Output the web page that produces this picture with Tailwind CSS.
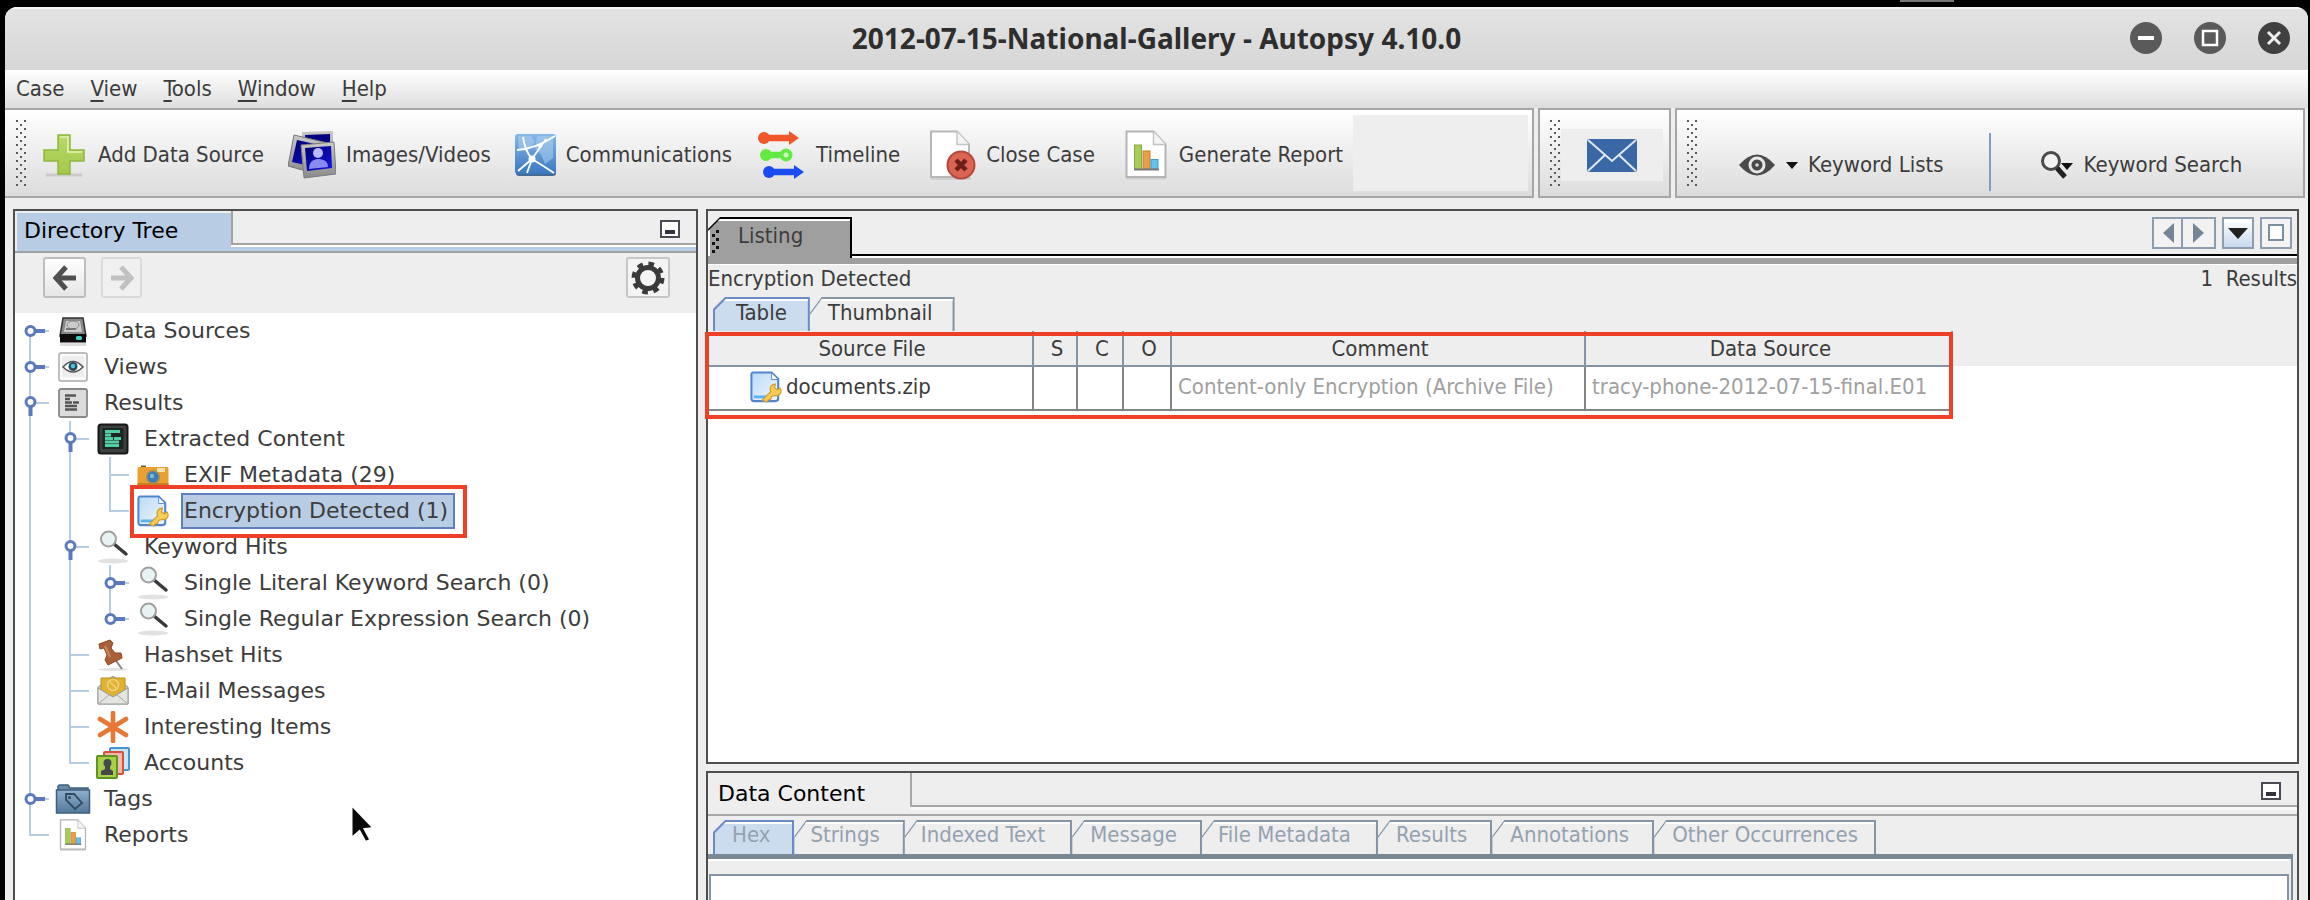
<!DOCTYPE html>
<html lang="en">
<head>
<meta charset="utf-8">
<title>2012-07-15-National-Gallery - Autopsy 4.10.0</title>
<script src="https://cdn.jsdelivr.net/npm/@tailwindcss/browser@4"></script>
</head>
<body class="bg-black">

<svg class="absolute size-0" aria-hidden="true">
  <defs>
    <linearGradient id="steel" x1="0" y1="0" x2="0" y2="1"><stop offset="0" stop-color="#8fb0cc"/><stop offset="1" stop-color="#53789b"/></linearGradient>
    <linearGradient id="sky" x1="0" y1="0" x2="1" y2="1"><stop offset="0" stop-color="#b9d9f6"/><stop offset="1" stop-color="#f2f8ff"/></linearGradient>
    <linearGradient id="comm" x1="0" y1="0" x2="0" y2="1"><stop offset="0" stop-color="#86b8e6"/><stop offset="1" stop-color="#3a78c0"/></linearGradient>
    <linearGradient id="plus" x1="0" y1="0" x2="0" y2="1"><stop offset="0" stop-color="#b7d96a"/><stop offset="1" stop-color="#a3c94a"/></linearGradient>
    <linearGradient id="photo" x1="0" y1="0" x2="1" y2="1"><stop offset="0" stop-color="#000070"/><stop offset="1" stop-color="#1414e0"/></linearGradient>
    <linearGradient id="frame" x1="0" y1="0" x2="0" y2="1"><stop offset="0" stop-color="#c8c8c8"/><stop offset="1" stop-color="#8a8a8a"/></linearGradient>
    <pattern id="grip" width="8" height="8" patternUnits="userSpaceOnUse"><path d="M1 1h2v2h-2zM5 5h2v2h-2z" fill="#5a5a5a"/></pattern>
  </defs>
  <!-- tree guides: 40 x 36 cells, trunk at x = 15 -->
  <symbol id="g-line" viewBox="0 0 40 36"><path d="M15 0v36" stroke="#b8cce4" stroke-width="2"/></symbol>
  <symbol id="g-tee" viewBox="0 0 40 36"><path d="M15 0v36M15 18h19" stroke="#b8cce4" stroke-width="2"/></symbol>
  <symbol id="g-end" viewBox="0 0 40 36"><path d="M15 0v19M15 18h19" stroke="#b8cce4" stroke-width="2"/></symbol>
  <symbol id="g-key" viewBox="0 0 40 36"><path d="M20 18h14" stroke="#b8cce4" stroke-width="2"/><path d="M20 18h10" stroke="#5b79bd" stroke-width="4"/><circle cx="15.500" cy="18" r="4.500" fill="#fff" stroke="#5b79bd" stroke-width="3"/></symbol>
  <symbol id="g-closed" viewBox="0 0 40 36"><path d="M15 0v36" stroke="#b8cce4" stroke-width="2"/><use href="#g-key" width="40" height="36"/></symbol>
  <symbol id="g-closed-first" viewBox="0 0 40 36"><path d="M15 18v18" stroke="#b8cce4" stroke-width="2"/><use href="#g-key" width="40" height="36"/></symbol>
  <symbol id="g-closed-last" viewBox="0 0 40 36"><path d="M15 0v18" stroke="#b8cce4" stroke-width="2"/><use href="#g-key" width="40" height="36"/></symbol>
  <symbol id="g-open" viewBox="0 0 40 36"><path d="M15 0v36M20 18h14" stroke="#b8cce4" stroke-width="2"/><path d="M15.500 22v9" stroke="#5b79bd" stroke-width="4"/><circle cx="15.500" cy="17" r="4.500" fill="#fff" stroke="#5b79bd" stroke-width="3"/></symbol>

  <symbol id="i-drive" viewBox="0 0 32 32"><path d="M3 29.500h26" stroke="#ddd" stroke-width="3"/><path d="M6 3h20l3 18H3z" fill="#888" stroke="#333" stroke-width="1.500"/><path d="M9 6h14l2 11H7z" fill="#ccc"/><ellipse cx="16" cy="10" rx="6" ry="4" fill="none" stroke="#888"/><path d="M9 14h10" stroke="#777" stroke-width="2"/><rect x="3" y="19" width="26" height="8.500" fill="#0c0c0c"/><rect x="19" y="21" width="6" height="4" rx="1.500" fill="#3fd0c0"/></symbol>
  <symbol id="i-views" viewBox="0 0 32 32"><rect x="2" y="2" width="28" height="28" rx="2" fill="#fafafa" stroke="#aaa" stroke-width="1.500"/><rect x="5" y="5" width="22" height="21" fill="#eee"/><path d="M6 16q10-11 20 0q-10 10-20 0z" fill="#fff" stroke="#555" stroke-width="1.500"/><circle cx="16" cy="15.500" r="4.500" fill="#2c4c5c"/><circle cx="16" cy="15" r="2.200" fill="#4bc4e8"/></symbol>
  <symbol id="i-results" viewBox="0 0 32 32"><rect x="2" y="2" width="28" height="28" rx="2" fill="#dcdcdc" stroke="#888" stroke-width="1.800"/><path d="M8 8.500h11M8 12h5M8 15.500h7M16 15.500h6M8 19h12M8 22.500h12" stroke="#555" stroke-width="2.400"/></symbol>
  <symbol id="i-extract" viewBox="0 0 32 32"><rect x="1.500" y="1.500" width="29" height="29" rx="2.500" fill="#3c3f3e" stroke="#161616" stroke-width="2"/><rect x="5.500" y="5" width="21" height="21" fill="#1d2624"/><path d="M8 8.500h15M8 12h6M8 15.500h8M17 15.500h7M8 19h14M8 22.500h14" stroke="#52cfa2" stroke-width="2.800"/></symbol>
  <symbol id="i-camera" viewBox="0 0 32 32"><path d="M4 6.500h5v4H4z" fill="#6b5a3a"/><rect x="0.500" y="8" width="31" height="20" rx="1.500" fill="#e9a033"/><rect x="0.500" y="24" width="31" height="4" fill="#c97f1c"/><rect x="20" y="9" width="8" height="4" fill="#fbe3b0"/><circle cx="16" cy="18" r="7" fill="#a98a55"/><circle cx="16" cy="18" r="5.500" fill="#3d7fb4"/><circle cx="15" cy="17" r="2.200" fill="#80b8e0"/></symbol>
  <symbol id="i-encrypt" viewBox="0 0 34 34"><path d="M3 1.500h20l7 7V29a3 3 0 0 1-3 3H4a2.500 2.500 0 0 1-2.500-2.500V3.500A2 2 0 0 1 3 1.500z" fill="url(#sky)" stroke="#5286cc" stroke-width="2.200"/><path d="M4 26h14v3H4z" fill="#58b4f2"/><path d="M23 2v7h7z" fill="#fff" stroke="#5286cc"/><path d="M13 31l9-9c-2-5 1-8 5-8l-1 4 3 2 3-2c3 5-1 9-6 8l-3 1-1 3-3 1-1 2z" fill="#f5cd55" stroke="#d19a2a" stroke-width="1.200"/></symbol>
  <symbol id="i-lens" viewBox="0 0 32 36"><ellipse cx="16" cy="32" rx="15" ry="2.500" fill="#e2e2e2"/><path d="M17 15l12 10" stroke="#3a3a3a" stroke-width="3.500" stroke-linecap="round"/><circle cx="11.500" cy="10" r="7.500" fill="#e8f4f4" stroke="#a0a0a0" stroke-width="2"/></symbol>
  <symbol id="i-pin" viewBox="0 0 32 32"><ellipse cx="16" cy="30.500" rx="15" ry="1.500" fill="#e2e2e2"/><path d="M17 19l8 11" stroke="#888" stroke-width="2"/><path d="M2 5l11-4 3 3-2 5 4 5 6 0 1 5-14 7-3-5 2-5-3-7-4 1z" fill="#a95f38" stroke="#8a4826"/><path d="M8 7l5 11" stroke="#cc8358" stroke-width="2.500"/></symbol>
  <symbol id="i-mail" viewBox="0 0 32 32"><path d="M1 12L16 1l15 11v17H1z" fill="#c9c9c9" stroke="#999"/><path d="M4 3h24v14l-12 7L4 17z" fill="#dfb232" stroke="#b98f1c"/><circle cx="16" cy="10" r="5.500" fill="none" stroke="#edd27c" stroke-width="1.500"/><path d="M13 7l6 6" stroke="#edd27c" stroke-width="1.500"/><path d="M1 13l15 9 15-9v16H1z" fill="#e4e4e0" stroke="#999"/><path d="M1 29l11-9M31 29l-11-9" stroke="#aaa"/></symbol>
  <symbol id="i-star" viewBox="0 0 32 32"><path d="M16 2v28M3 8l26 16M29 8L3 24" stroke="#e67735" stroke-width="4.600" stroke-linecap="round"/></symbol>
  <symbol id="i-accounts" viewBox="0 0 36 34"><rect x="15" y="2" width="19" height="22" rx="1" fill="#c9e5f8" stroke="#4795cf" stroke-width="2"/><rect x="9" y="6" width="19" height="22" rx="1" fill="#f7b9ad" stroke="#d8503f" stroke-width="2"/><rect x="2" y="10" width="20" height="22" rx="1" fill="#a8cf48" stroke="#5f9423" stroke-width="2"/><path d="M6 29v-4l4-2v-8h5v8l3 2v4z" fill="#444a4c"/><circle cx="12.500" cy="17" r="4" fill="#444a4c"/></symbol>
  <symbol id="i-tags" viewBox="0 0 36 32"><path d="M3 8V3.500A2 2 0 0 1 5 2h8l2 3h18v24H3z" fill="#6c8cab" stroke="#3f5f7d" stroke-width="1.500"/><rect x="1.500" y="7" width="33" height="23" fill="url(#steel)" stroke="#3f5f7d" stroke-width="1.500"/><path d="M11 11l8 0 8 9-7 6-9-9z" fill="none" stroke="#2f4a63" stroke-width="1.800"/><circle cx="14.500" cy="14.500" r="1.500" fill="#2f4a63"/></symbol>
  <symbol id="i-report" viewBox="0 0 42 50"><path d="M1 48h40" stroke="#d0d0d0" stroke-width="3"/><path d="M1.500 1.500h27l12 13V47H1.500z" fill="#fff" stroke="#b4b4b4" stroke-width="2"/><path d="M28.500 1.500v13h12" fill="#f4f4f4" stroke="#c4c4c4" stroke-width="1.500"/><rect x="9.500" y="15" width="7" height="24" fill="#a6cb5e" stroke="#86ad3c"/><rect x="18" y="21" width="7" height="18" fill="#e8a04a" stroke="#c87f26"/><rect x="26" y="29.500" width="7" height="9.500" fill="#6cc0e8" stroke="#3e9ccb"/><path d="M9 39.500h25" stroke="#7b7b7b" stroke-width="2"/></symbol>
  <symbol id="i-min" viewBox="0 0 20 18"><rect x="1" y="1" width="18" height="16" fill="#fff" stroke="#4a4a55" stroke-width="2"/><path d="M5 12h10" stroke="#333340" stroke-width="4"/></symbol>
</svg>

<div class="flex h-screen flex-col overflow-hidden bg-black pt-[7px] pr-[2px] pl-[5px] font-['DejaVu_Sans_Condensed','DejaVu_Sans',sans-serif] text-[22px] leading-7 text-[#3c3c3c]">
  <div class="absolute top-0 left-[1900px] h-[2px] w-[54px] bg-[#777]"></div>
  <div class="flex min-h-0 flex-1 flex-col overflow-hidden rounded-t-[12px] bg-[#eeeeee]">

    <header class="grid h-[63px] shrink-0 grid-cols-[1fr_auto_1fr] items-center border-t-2 border-[#f4f4f4] bg-linear-to-b from-[#e3e3e3] to-[#d6d6d6] pb-[3px]">
      <span></span>
      <h1 class="font-['Noto_Sans','Open_Sans',sans-serif] text-[28px] leading-9 font-bold text-[#2e2e2e]">2012-07-15-National-Gallery - Autopsy 4.10.0</h1>
      <div class="flex justify-end gap-8 pr-[18px]">
        <button aria-label="Minimize"><svg class="size-8" viewBox="0 0 32 32"><circle cx="16" cy="16" r="16" fill="#5a5a5a"/><path d="M8 16h16" stroke="#fff" stroke-width="4"/></svg></button>
        <button aria-label="Maximize"><svg class="size-8" viewBox="0 0 32 32"><circle cx="16" cy="16" r="16" fill="#5a5a5a"/><rect x="9" y="9" width="14" height="14" fill="none" stroke="#fff" stroke-width="2.500"/></svg></button>
        <button aria-label="Close"><svg class="size-8" viewBox="0 0 32 32"><circle cx="16" cy="16" r="16" fill="#404040"/><path d="M10 10l12 12M22 10L10 22" stroke="#eee" stroke-width="3"/></svg></button>
      </div>
    </header>

    <nav class="flex h-[38px] shrink-0 items-center gap-[26px] bg-linear-to-b from-white to-[#dedede] pl-[11px]">
      <button>Case</button>
      <button><u class="underline-offset-4 decoration-2">V</u>iew</button>
      <button><u class="underline-offset-4 decoration-2">T</u>ools</button>
      <button><u class="underline-offset-4 decoration-2">W</u>indow</button>
      <button><u class="underline-offset-4 decoration-2">H</u>elp</button>
    </nav>

    <div class="flex h-[90px] shrink-0 gap-1 pr-[3px]">
      <div class="flex flex-1 items-center border-2 border-l-0 border-[#a6a6a6] bg-linear-to-b from-white to-[#dcdcdc] pr-1 pl-[10px]">
        <svg class="h-[68px] w-3"><rect width="12" height="68" fill="url(#grip)"/></svg>
        <div class="flex items-center gap-6 pt-1 pl-[13px]">
          <button class="flex items-center gap-[10px] whitespace-nowrap">
            <svg class="h-12 w-[48px]" viewBox="0 0 48 48"><path d="M6 44h36" stroke="#c9c9c9" stroke-width="3"/><path d="M18 4h12v15h14v11H30v13H18V30H4V19h14z" fill="url(#plus)" stroke="#8fb93a" stroke-width="1.500"/><path d="M20 6h8v15h14" fill="none" stroke="#d9eda0" stroke-width="2"/></svg>Add Data Source</button>
          <button class="flex items-center gap-[10px] whitespace-nowrap">
            <svg class="h-12 w-[48px]" viewBox="0 0 48 48"><path d="M14 1l31-1v30l-30 4z" fill="url(#frame)"/><path d="M17 4l25-1v20l-24 3z" fill="#000080"/><path d="M6 4l34 8-8 32L0 35z" fill="url(#frame)" stroke="#777"/><path d="M9 9l27 6-6 22-26-6z" fill="url(#photo)"/><path d="M13 14l33-3 2 32-32 4z" fill="url(#frame)" stroke="#7c7c7c"/><path d="M17 17l26-2 1 22-25 3z" fill="url(#photo)"/><circle cx="30" cy="22" r="5" fill="#b9b9ff"/><path d="M21 38q0-9 8-10h3q8 1 8 8z" fill="#8a8af4"/></svg>Images/Videos</button>
          <button class="flex items-center gap-[10px] whitespace-nowrap">
            <svg class="h-12 w-[41px]" viewBox="0 0 41 48"><rect x="1" y="5" width="40" height="40" rx="3" fill="#476a92"/><rect x="0" y="3" width="41" height="40" rx="3" fill="url(#comm)"/><path d="M3 5h13l4 6-7 9-9-2zM22 5h16v22l-8 6-4-10-6-5z" fill="#a9cdee" opacity=".6"/><path d="M2 19q18-1 38-14M8 6q2 14 9 22q10 6 22 14M17 28L31 8M17 28L3 40M17 28l-5 14" fill="none" stroke="#fff" stroke-width="1.800"/><circle cx="17" cy="28" r="3.500" fill="#fff"/><circle cx="25" cy="15" r="2" fill="#fff"/></svg>Communications</button>
          <button class="flex items-center gap-[10px] whitespace-nowrap">
            <svg class="h-12 w-[50px]" viewBox="0 0 48 48"><g stroke-width="6.500"><path d="M6 7h30" stroke="#f0562a"/><path d="M10 24h22" stroke="#62ea42"/><path d="M12 41h26" stroke="#1a4cf2"/></g><circle cx="7" cy="7" r="6" fill="#f0562a"/><path d="M32 0l10 7-10 7z" fill="#f0562a"/><circle cx="9" cy="24" r="6" fill="#62ea42"/><circle cx="29" cy="24" r="4.500" fill="#cdf6c0" stroke="#62ea42" stroke-width="4"/><circle cx="12" cy="41" r="6" fill="#1a4cf2"/><path d="M37 34l10 7-10 7z" fill="#1a4cf2"/></svg>Timeline</button>
          <button class="ml-1 flex items-center gap-[10px] whitespace-nowrap">
            <svg class="h-[50px] w-[48px]" viewBox="0 0 48 50"><path d="M3 49h40" stroke="#cfcfcf" stroke-width="2"/><path d="M3 1.500h26l12 13V47H3z" fill="#fff" stroke="#b8b8b8" stroke-width="2"/><path d="M29 1.500v13h12" fill="#f4f4f4" stroke="#c4c4c4" stroke-width="1.500"/><circle cx="33" cy="35" r="13.500" fill="#dc6453" stroke="#b5483a" stroke-width="2"/><path d="M28 30l10 10M38 30L28 40" stroke="#6d1f18" stroke-width="4.500"/></svg>Close Case</button>
          <button class="ml-1 flex items-center gap-[10px] whitespace-nowrap">
            <svg class="h-[50px] w-[46px]" viewBox="0 0 42 50"><use href="#i-report" width="42" height="50"/></svg>Generate Report</button>
        </div>
        <div class="ml-[10px] h-[76px] flex-1 bg-[#eeeeee]"></div>
      </div>

      <div class="flex w-[133px] items-center border-2 border-[#a6a6a6] bg-linear-to-b from-white to-[#dcdcdc] pl-[9px]">
        <svg class="h-[68px] w-3"><rect width="12" height="68" fill="url(#grip)"/></svg>
        <button aria-label="Messages" class="mt-1 flex h-[52px] w-[102px] items-center justify-center bg-[#eeeeee]">
          <svg class="h-[33px] w-[50px]" viewBox="0 0 50 33"><rect width="50" height="33" rx="2" fill="#3a68a6"/><path d="M1 1l24 21L49 1M1 32l17-16M49 32L32 16" fill="none" stroke="#dfe8f4" stroke-width="2"/></svg>
        </button>
      </div>

      <div class="flex w-[630px] items-center border-2 border-[#a6a6a6] bg-linear-to-b from-white to-[#dcdcdc] pl-[9px]">
        <svg class="h-[68px] w-3"><rect width="12" height="68" fill="url(#grip)"/></svg>
        <button class="mt-6 ml-[40px] flex items-center gap-[10px] whitespace-nowrap">
          <svg class="h-6 w-[38px]" viewBox="0 0 38 24"><path d="M1 12Q19-9 37 12Q19 33 1 12z" fill="#4a4a4a"/><circle cx="19" cy="12" r="8.500" fill="#e8e8e8"/><circle cx="19" cy="12" r="5.500" fill="#4a4a4a"/><circle cx="19" cy="12" r="1.800" fill="#ddd"/></svg>
          <svg class="h-[7px] w-3" viewBox="0 0 12 7"><path d="M0 0h12L6 7z" fill="#111"/></svg>Keyword Lists</button>
        <div class="mb-[5px] ml-[45px] h-[58px] w-[2px] self-end bg-[#7f9cc9]"></div>
        <button class="mt-6 ml-[49px] flex items-center gap-[10px] whitespace-nowrap">
          <svg class="h-7 w-[34px]" viewBox="0 0 34 28"><circle cx="11" cy="10" r="8.500" fill="#f2f2f2" stroke="#4a4a4a" stroke-width="3"/><path d="M17 17l8 9" stroke="#222" stroke-width="5"/><path d="M21 12h12l-6 7z" fill="#111"/></svg>Keyword Search</button>
      </div>
    </div>

    <main class="flex min-h-0 flex-1 gap-[8px] pt-[11px] pr-[9px] pl-2">

      <section class="flex w-[685px] shrink-0 flex-col border-2 border-b-0 border-[#4e4e4e] bg-white font-['DejaVu_Sans',sans-serif]">
        <div class="flex h-[42px] shrink-0 border-b-2 border-[#a2a2a2] bg-[#eeeeee] pl-[2px]">
          <h2 class="flex w-[214px] items-center border-t-2 border-[#eeeeee] bg-[#b8cce4] pb-[3px] pl-[7px] text-[22px] text-black">Directory Tree</h2>
          <div class="flex flex-1 flex-col">
            <div class="flex h-[34px] items-center justify-end border-b-2 border-l-2 border-[#a2a2a2] pr-4"><button aria-label="Minimize panel"><svg class="mt-[3px] h-[18px] w-5"><use href="#i-min"/></svg></button></div>
            <div class="h-[2px] bg-white"></div>
            <div class="h-1 bg-[#b8cce4]"></div>
          </div>
        </div>
        <div class="flex h-[60px] shrink-0 items-center bg-[#eeeeee] pr-[26px] pb-[11px] pl-7">
          <button aria-label="Back" class="flex h-[41px] w-[43px] items-center justify-center rounded-[3px] border-2 border-[#bdbdbd] bg-linear-to-b from-white to-[#e6e6e6]"><svg class="size-7" viewBox="0 0 28 28"><path d="M15 3L5 14l10 11M5 14h20" fill="none" stroke="#505050" stroke-width="5"/></svg></button>
          <button aria-label="Forward" class="ml-[15px] flex h-[41px] w-[41px] items-center justify-center rounded-[3px] border-2 border-[#dadada] bg-[#f0f0f0]"><svg class="size-7" viewBox="0 0 28 28"><path d="M13 3l10 11-10 11M23 14H3" fill="none" stroke="#c0c0c0" stroke-width="5"/></svg></button>
          <button aria-label="Options" class="ml-auto flex h-[41px] w-11 items-center justify-center rounded-[3px] border-2 border-[#c6c6c6] bg-[#f4f4f4]"><svg class="h-[34px] w-[34px]" viewBox="0 0 34 34"><circle cx="17" cy="17" r="14" fill="none" stroke="#3a3a3a" stroke-width="5" stroke-dasharray="5.500 5.496"/><circle cx="17" cy="17" r="10.500" fill="none" stroke="#3a3a3a" stroke-width="5"/></svg></button>
        </div>
        <ul class="[&_svg]:shrink-0 [&>li]:flex [&>li]:h-9 [&>li]:items-center [&>li]:whitespace-nowrap">
          <li><svg class="h-9 w-10"><use href="#g-closed-first"/></svg><svg class="mr-[15px] ml-[2px] size-8"><use href="#i-drive"/></svg>Data Sources</li>
          <li><svg class="h-9 w-10"><use href="#g-closed"/></svg><svg class="mr-[15px] ml-[2px] size-8"><use href="#i-views"/></svg>Views</li>
          <li><svg class="h-9 w-10"><use href="#g-open"/></svg><svg class="mr-[15px] ml-[2px] size-8"><use href="#i-results"/></svg>Results</li>
          <li><svg class="h-9 w-10"><use href="#g-line"/></svg><svg class="h-9 w-10"><use href="#g-open"/></svg><svg class="mr-[15px] ml-[2px] size-8"><use href="#i-extract"/></svg>Extracted Content</li>
          <li><svg class="h-9 w-10"><use href="#g-line"/></svg><svg class="h-9 w-10"><use href="#g-line"/></svg><svg class="h-9 w-10"><use href="#g-tee"/></svg><svg class="mr-[15px] ml-[2px] size-8"><use href="#i-camera"/></svg>EXIF Metadata (29)</li>
          <li class="relative"><svg class="h-9 w-10"><use href="#g-line"/></svg><svg class="h-9 w-10"><use href="#g-line"/></svg><svg class="h-9 w-10"><use href="#g-end"/></svg><svg class="mr-[12px] ml-[2px] h-8 w-8"><use href="#i-encrypt"/></svg><span class="flex h-9 items-center border-2 border-[#5f80bd] bg-[#b8cce4] pr-[5px] pl-px">Encryption Detected (1)</span>
            <span class="absolute -top-2 left-[115px] z-10 h-[53px] w-[337px] border-4 border-[#ee4026]"></span></li>
          <li><svg class="h-9 w-10"><use href="#g-line"/></svg><svg class="h-9 w-10"><use href="#g-open"/></svg><svg class="mr-[15px] ml-[2px] h-9 w-8"><use href="#i-lens"/></svg>Keyword Hits</li>
          <li><svg class="h-9 w-10"><use href="#g-line"/></svg><svg class="h-9 w-10"><use href="#g-line"/></svg><svg class="h-9 w-10"><use href="#g-closed"/></svg><svg class="mr-[15px] ml-[2px] h-9 w-8"><use href="#i-lens"/></svg>Single Literal Keyword Search (0)</li>
          <li><svg class="h-9 w-10"><use href="#g-line"/></svg><svg class="h-9 w-10"><use href="#g-line"/></svg><svg class="h-9 w-10"><use href="#g-closed-last"/></svg><svg class="mr-[15px] ml-[2px] h-9 w-8"><use href="#i-lens"/></svg>Single Regular Expression Search (0)</li>
          <li><svg class="h-9 w-10"><use href="#g-line"/></svg><svg class="h-9 w-10"><use href="#g-tee"/></svg><svg class="mr-[15px] ml-[2px] size-8"><use href="#i-pin"/></svg>Hashset Hits</li>
          <li><svg class="h-9 w-10"><use href="#g-line"/></svg><svg class="h-9 w-10"><use href="#g-tee"/></svg><svg class="mr-[15px] ml-[2px] size-8"><use href="#i-mail"/></svg>E-Mail Messages</li>
          <li><svg class="h-9 w-10"><use href="#g-line"/></svg><svg class="h-9 w-10"><use href="#g-tee"/></svg><svg class="mr-[15px] ml-[2px] size-8"><use href="#i-star"/></svg>Interesting Items</li>
          <li><svg class="h-9 w-10"><use href="#g-line"/></svg><svg class="h-9 w-10"><use href="#g-end"/></svg><svg class="mr-[13px] h-[34px] w-9"><use href="#i-accounts"/></svg>Accounts</li>
          <li><svg class="h-9 w-10"><use href="#g-closed"/></svg><svg class="mr-[13px] h-8 w-9"><use href="#i-tags"/></svg>Tags</li>
          <li><svg class="h-9 w-10"><use href="#g-end"/></svg><svg class="mr-[15px] ml-[2px] size-8"><use href="#i-report"/></svg>Reports</li>
        </ul>
      </section>

      <div class="flex min-w-0 flex-1 flex-col gap-[7px]">
        <section class="flex min-h-0 flex-1 flex-col border-2 border-[#4e4e4e] bg-white">
          <div class="flex h-[47px] shrink-0 bg-[#eeeeee]">
            <div class="flex w-[144px] pt-[6px]">
              <button class="flex w-full bg-black pt-[2px] pr-[2px] [clip-path:polygon(12px_0,100%_0,100%_100%,0_100%,0_12px)]">
                <span class="flex h-full w-full items-center border-t-2 border-white bg-[#9f9f9f] pb-2 [clip-path:polygon(12px_0,100%_0,100%_100%,0_100%,0_12px)]">
                  <svg class="mt-3 h-7 w-3" viewBox="0 0 12 28"><path d="M1 2v26" stroke="#fff" stroke-width="2"/><path d="M8 2h3v3h-3zM4 6h3v3h-3zM8 10h3v3h-3zM4 14h3v3h-3zM8 18h3v3h-3zM4 22h3v3h-3z" fill="#111"/></svg>
                  <span class="pl-[18px]">Listing</span>
                </span>
              </button>
            </div>
            <div class="flex flex-1 flex-col">
              <div class="flex h-[45px] items-start justify-end border-b-2 border-black pt-[6px] pr-[5px]">
                <button aria-label="Scroll left" class="flex h-8 w-[31px] items-center justify-center border-2 border-[#8d9db0] bg-[#f2f2f2]"><svg class="h-5 w-3" viewBox="0 0 12 20"><path d="M12 0v20L1 10z" fill="#768596"/></svg></button>
                <button aria-label="Scroll right" class="flex h-8 w-[33px] items-center justify-center border-2 border-l-0 border-[#8d9db0] bg-[#f2f2f2]"><svg class="h-5 w-3" viewBox="0 0 12 20"><path d="M0 0v20l11-10z" fill="#768596"/></svg></button>
                <button aria-label="Show opened documents" class="ml-[6px] flex h-8 w-8 items-center justify-center border-2 border-[#8d9db0] bg-linear-to-b from-white to-[#c9daee]"><svg class="h-3 w-5" viewBox="0 0 20 12"><path d="M0 1h20L10 12z" fill="#222"/></svg></button>
                <button aria-label="Maximize panel" class="ml-[6px] flex h-8 w-8 items-center justify-center border-2 border-[#8d9db0] bg-[#f4f4f4]"><svg class="h-[18px] w-4" viewBox="0 0 16 18"><rect x="1" y="1" width="14" height="15" fill="#fff" stroke="#7d8ea3" stroke-width="2"/></svg></button>
              </div>
              <div class="h-[2px] bg-white"></div>
            </div>
          </div>
          <div class="h-[7px] shrink-0 border-b border-white bg-[#9f9f9f]"></div>
          <div class="flex h-7 shrink-0 items-center justify-between bg-[#eeeeee] whitespace-pre"><span>Encryption Detected</span><span>1  Results</span></div>
          <div class="flex h-[38px] shrink-0 bg-[#eeeeee] pt-1 pl-[5px]">
            <button class="flex bg-[#6a8bc6] px-[2px] pt-[2px] [clip-path:polygon(12px_0,100%_0,100%_100%,0_100%,0_12px)]"><span class="flex h-full items-center border-t-2 border-white bg-[#cbdcef] pr-[21px] pb-[6px] pl-[21px] [clip-path:polygon(11px_0,100%_0,100%_100%,0_100%,0_11px)]">Table</span></button>
            <button class="flex bg-[#8494a5] pt-[2px] pr-[2px] [clip-path:polygon(12px_0,100%_0,100%_100%,0_100%,0_16px)]"><span class="flex h-full items-center border-t-2 border-white bg-[#eeeeee] pr-[20px] pb-[6px] pl-[18px] [clip-path:polygon(12px_0,100%_0,100%_100%,0_100%,0_16px)]">Thumbnail</span></button>
          </div>
          <div class="flex">
            <div class="relative w-[1245px]">
              <table class="w-full table-fixed border-collapse">
                <colgroup><col class="w-[325px]"><col class="w-[44px]"><col class="w-[46px]"><col class="w-[48px]"><col class="w-[414px]"><col></colgroup>
                <thead>
                  <tr class="h-[35px] bg-[#eeeeee] [&>th]:border-r-2 [&>th]:border-b-2 [&>th]:border-[#8494a5] [&>th]:p-0 [&>th]:pt-px [&>th]:pl-[4px] [&>th]:font-normal"><th>Source File</th><th>S</th><th>C</th><th>O</th><th>Comment</th><th>Data Source</th></tr>
                </thead>
                <tbody>
                  <tr class="h-[44px] text-[#a0a0a0] [&>td]:border-r-2 [&>td]:border-b-2 [&>td]:border-[#848484] [&>td]:p-0 [&>td]:pb-[2px] [&>td]:whitespace-nowrap"><td class="text-[#3c3c3c]"><span class="flex items-center gap-1 pl-[42px]"><svg class="size-8"><use href="#i-encrypt"/></svg>documents.zip</span></td><td></td><td></td><td></td><td><span class="pl-[6px]">Content-only Encryption (Archive File)</span></td><td><span class="pl-[6px]">tracy-phone-2012-07-15-final.E01</span></td></tr>
                </tbody>
              </table>
              <div class="pointer-events-none absolute top-px right-0 -bottom-2 -left-[3px] border-4 border-[#ee4026]"></div>
            </div>
            <div class="h-[35px] flex-1 bg-[#eeeeee]"></div>
          </div>
        </section>

        <section class="flex h-[129px] shrink-0 flex-col border-2 border-b-0 border-[#4e4e4e] bg-[#eeeeee]">
          <div class="flex h-[43px] shrink-0 border-b-2 border-[#a8a8a8]">
            <h2 class="w-[202px] pt-[7px] pl-[10px] font-['DejaVu_Sans',sans-serif] text-[22px] text-black">Data Content</h2>
            <div class="flex flex-1 flex-col">
              <div class="flex h-[34px] items-center justify-end border-b-2 border-l-2 border-[#a8a8a8] pr-4"><button aria-label="Minimize panel"><svg class="mt-[3px] h-[18px] w-5"><use href="#i-min"/></svg></button></div>
              <div class="h-[3px] bg-[#f8f8f8]"></div>
            </div>
          </div>
          <div class="flex h-[38px] shrink-0 pt-1 pl-[5px] whitespace-nowrap text-[#94a1af]">
            <button class="flex bg-[#6a8bc6] px-[2px] pt-[2px] [clip-path:polygon(12px_0,100%_0,100%_100%,0_100%,0_12px)]"><span class="flex h-full items-center border-t-2 border-white bg-[#cbdcef] pr-[22px] pb-[8px] pl-[17px] [clip-path:polygon(11px_0,100%_0,100%_100%,0_100%,0_11px)]">Hex</span></button>
            <button class="flex bg-[#8494a5] pt-[2px] pr-[2px] [clip-path:polygon(12px_0,100%_0,100%_100%,0_100%,0_16px)]"><span class="flex h-full items-center border-t-2 border-white bg-[#eeeeee] pr-[23px] pb-[8px] pl-[16px] [clip-path:polygon(12px_0,100%_0,100%_100%,0_100%,0_16px)]">Strings</span></button>
            <button class="flex bg-[#8494a5] pt-[2px] pr-[2px] [clip-path:polygon(12px_0,100%_0,100%_100%,0_100%,0_16px)]"><span class="flex h-full items-center border-t-2 border-white bg-[#eeeeee] pr-[25px] pb-[8px] pl-[16px] [clip-path:polygon(12px_0,100%_0,100%_100%,0_100%,0_16px)]">Indexed Text</span></button>
            <button class="flex bg-[#8494a5] pt-[2px] pr-[2px] [clip-path:polygon(12px_0,100%_0,100%_100%,0_100%,0_16px)]"><span class="flex h-full items-center border-t-2 border-white bg-[#eeeeee] pr-[23px] pb-[8px] pl-[18px] [clip-path:polygon(12px_0,100%_0,100%_100%,0_100%,0_16px)]">Message</span></button>
            <button class="flex bg-[#8494a5] pt-[2px] pr-[2px] [clip-path:polygon(12px_0,100%_0,100%_100%,0_100%,0_16px)]"><span class="flex h-full items-center border-t-2 border-white bg-[#eeeeee] pr-[25px] pb-[8px] pl-[16px] [clip-path:polygon(12px_0,100%_0,100%_100%,0_100%,0_16px)]">File Metadata</span></button>
            <button class="flex bg-[#8494a5] pt-[2px] pr-[2px] [clip-path:polygon(12px_0,100%_0,100%_100%,0_100%,0_16px)]"><span class="flex h-full items-center border-t-2 border-white bg-[#eeeeee] pr-[23px] pb-[8px] pl-[18px] [clip-path:polygon(12px_0,100%_0,100%_100%,0_100%,0_16px)]">Results</span></button>
            <button class="flex bg-[#8494a5] pt-[2px] pr-[2px] [clip-path:polygon(12px_0,100%_0,100%_100%,0_100%,0_16px)]"><span class="flex h-full items-center border-t-2 border-white bg-[#eeeeee] pr-[23px] pb-[8px] pl-[18px] [clip-path:polygon(12px_0,100%_0,100%_100%,0_100%,0_16px)]">Annotations</span></button>
            <button class="flex bg-[#8494a5] pt-[2px] pr-[2px] [clip-path:polygon(12px_0,100%_0,100%_100%,0_100%,0_16px)]"><span class="flex h-full items-center border-t-2 border-white bg-[#eeeeee] pr-[16px] pb-[8px] pl-[18px] [clip-path:polygon(12px_0,100%_0,100%_100%,0_100%,0_16px)]">Other Occurrences</span></button>
          </div>
          <div class="mr-1 flex flex-1 flex-col border-t-[5px] border-r-2 border-[#7a8996] pr-[2px]">
            <div class="flex flex-1 flex-col border-t-2 border-white pt-[13px] pl-px">
              <div class="flex-1 border-2 border-b-0 border-[#8494a5] bg-white"></div>
            </div>
          </div>
        </section>
      </div>
    </main>
  </div>

  <svg class="absolute top-[803px] left-[350px] h-10 w-7" viewBox="0 0 28 40"><path d="M1.500 2l22 23-9 1 6 11-5 2-6-11-8 7z" fill="#0a0a0a" stroke="#fff" stroke-width="2"/></svg>
</div>
</body>
</html>
